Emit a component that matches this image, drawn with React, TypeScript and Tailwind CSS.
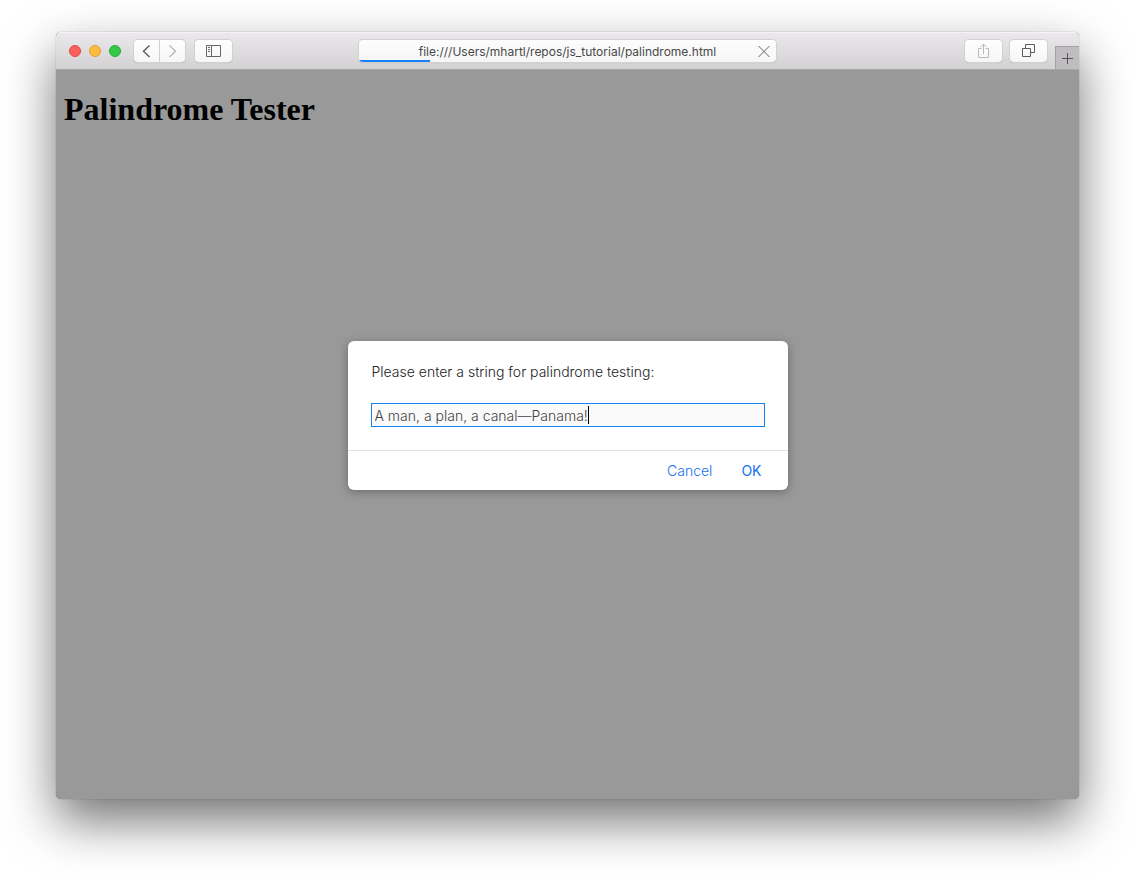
import { useId, type ReactNode } from "react";

type ToolButtonProps = {
  label: string;
  className?: string;
  children: ReactNode;
};

function ToolButton({ label, className = "w-[37px] rounded", children }: ToolButtonProps) {
  return (
    <button
      type="button"
      aria-label={label}
      className={`flex h-[22px] items-center justify-center bg-linear-to-b from-[#fefefe] to-[#f6f6f6] shadow-[0_0_0_1px_#d2d0d2,0_1px_1px_#a5a3a5] ${className}`}
    >
      {children}
    </button>
  );
}

function TrafficLights() {
  return (
    <div className="flex gap-2">
      <button type="button" aria-label="Close" className="size-3 rounded-full border border-[#e2463f] bg-[#fc605b]" />
      <button type="button" aria-label="Minimize" className="size-3 rounded-full border border-[#dfa032] bg-[#fdbc40]" />
      <button type="button" aria-label="Zoom" className="size-3 rounded-full border border-[#27aa35] bg-[#34c84a]" />
    </div>
  );
}

function Toolbar() {
  return (
    <header className="grid h-[38px] shrink-0 grid-cols-[1fr_417px_1fr] border-b border-[#a9a7a9] bg-linear-to-b from-[#ebe9eb] to-[#d3d1d3] shadow-[inset_0_1px_0_#f5f4f5]">
      <div className="flex items-center pl-[13px]">
        <TrafficLights />
        <div className="ml-[13px] flex gap-px">
          <ToolButton label="Back" className="w-[25px] rounded-l">
            <svg width="9" height="14" viewBox="0 0 9 14" fill="none" stroke="#5c5c5c" strokeWidth="1.4">
              <path d="M7.500 1.500 1.500 7.200l6 5.700" />
            </svg>
          </ToolButton>
          <ToolButton label="Forward" className="w-[25px] rounded-r">
            <svg width="9" height="14" viewBox="0 0 9 14" fill="none" stroke="#b9b9b9" strokeWidth="1.4">
              <path d="m1.500 1.500 6 5.700-6 5.700" />
            </svg>
          </ToolButton>
        </div>
        <div className="ml-[10px]">
          <ToolButton label="Show sidebar">
            <svg width="15" height="12" viewBox="0 0 15 12" fill="none" stroke="#666" strokeWidth="1">
              <path d="M.5.5h14v11H.5zM5.500.5v11M2 2.500h2M2 4.500h2M2 6.500h2" />
            </svg>
          </ToolButton>
        </div>
      </div>

      <div className="relative flex h-[22px] items-center self-center overflow-hidden rounded bg-linear-to-b from-[#fdfdfd] to-[#f6f6f6] shadow-[0_0_0_1px_#d2d0d2,0_1px_1px_#a5a3a5]">
        <input
          aria-label="Address"
          type="text"
          readOnly
          value="file:///Users/mhartl/repos/js_tutorial/palindrome.html"
          className="h-full w-full bg-transparent pt-0.5 text-center font-[Inter,sans-serif] text-xs text-[#484848] outline-none"
        />
        <button type="button" aria-label="Stop loading" className="absolute right-1 flex size-4 items-center justify-center">
          <svg width="12" height="12" viewBox="0 0 12 12" fill="none" stroke="#666" strokeWidth="1">
            <path d="m.5 1 11 11M11.500 1l-11 11" />
          </svg>
        </button>
        <div className="absolute bottom-0 left-0 h-0.5 w-[17%] bg-[#1780fb]" />
      </div>

      <div className="flex items-center justify-end gap-2">
        <ToolButton label="Share">
          <svg width="11" height="16" viewBox="0 0 11 16" fill="none" stroke="#b9b9b9" strokeWidth="1">
            <path d="M3.500 5.500h-3v9h10v-9h-3M5.500 11V1M2.500 4l3-3 3 3" />
          </svg>
        </ToolButton>
        <ToolButton label="Show all tabs">
          <svg width="13" height="13" viewBox="0 0 13 13" fill="none" stroke="#5c5c5c" strokeWidth="1">
            <path d="M.5 4.500h8v8h-8zM3.500 4V.5h9v8H9" />
          </svg>
        </ToolButton>
        <button
          type="button"
          aria-label="New tab"
          className="flex h-[23px] w-6 items-center justify-center self-end border-t border-l border-[#a3a1a3] bg-[#bfbdbf]"
        >
          <svg width="11" height="11" viewBox="0 0 11 11" fill="none" stroke="#555" strokeWidth="1">
            <path d="M5.500 0v11M0 5.500h11" />
          </svg>
        </button>
      </div>
    </header>
  );
}

function PromptDialog() {
  const fieldId = useId();
  return (
    <form
      role="dialog"
      aria-label="Prompt"
      onSubmit={(event) => event.preventDefault()}
      className="w-[440px] rounded-md bg-white font-[Inter,sans-serif] text-sm font-light shadow-[0_2px_10px_rgba(0,0,0,0.3)]"
    >
      <div className="px-[23px] pt-5 pb-[23px]">
        <label htmlFor={fieldId} className="block pl-px leading-[22px] text-[#222]">
          Please enter a string for palindrome testing:
        </label>
        <div className="relative mt-5">
          <input
            id={fieldId}
            type="text"
            autoFocus
            onFocus={(event) => event.currentTarget.setSelectionRange(99, 99)}
            defaultValue="A man, a plan, a canal—Panama!"
            className="block h-6 w-full border border-[#1780fb] bg-[#fafafa] px-[3px] pt-px text-[#444] caret-transparent outline-none"
          />
          <span aria-hidden="true" className="absolute top-[3px] left-[217px] h-[18px] w-px bg-black" />
        </div>
      </div>
      <div className="flex h-10 items-center justify-end gap-[29px] border-t border-[#e2e2e2] pt-px pr-[26px] text-[#1470f0]">
        <button type="button">Cancel</button>
        <button type="submit" className="font-normal">OK</button>
      </div>
    </form>
  );
}

export default function App() {
  return (
    <div className="flex min-h-screen bg-white px-14 pt-8 pb-20">
      <div className="flex flex-1 flex-col overflow-hidden rounded-[5px] bg-[#999] shadow-[0_0_1px_rgba(0,0,0,0.5),0_22px_50px_rgba(0,0,0,0.55)]">
        <Toolbar />
        <main className="grid flex-1 grid-rows-[1fr_auto_1fr] justify-items-center pb-[38px]">
          <h1 className="w-full px-2 pt-[21px] font-['Liberation_Serif',serif] text-[32px] leading-[37px] font-bold text-black">
            Palindrome Tester
          </h1>
          <PromptDialog />
        </main>
      </div>
    </div>
  );
}
